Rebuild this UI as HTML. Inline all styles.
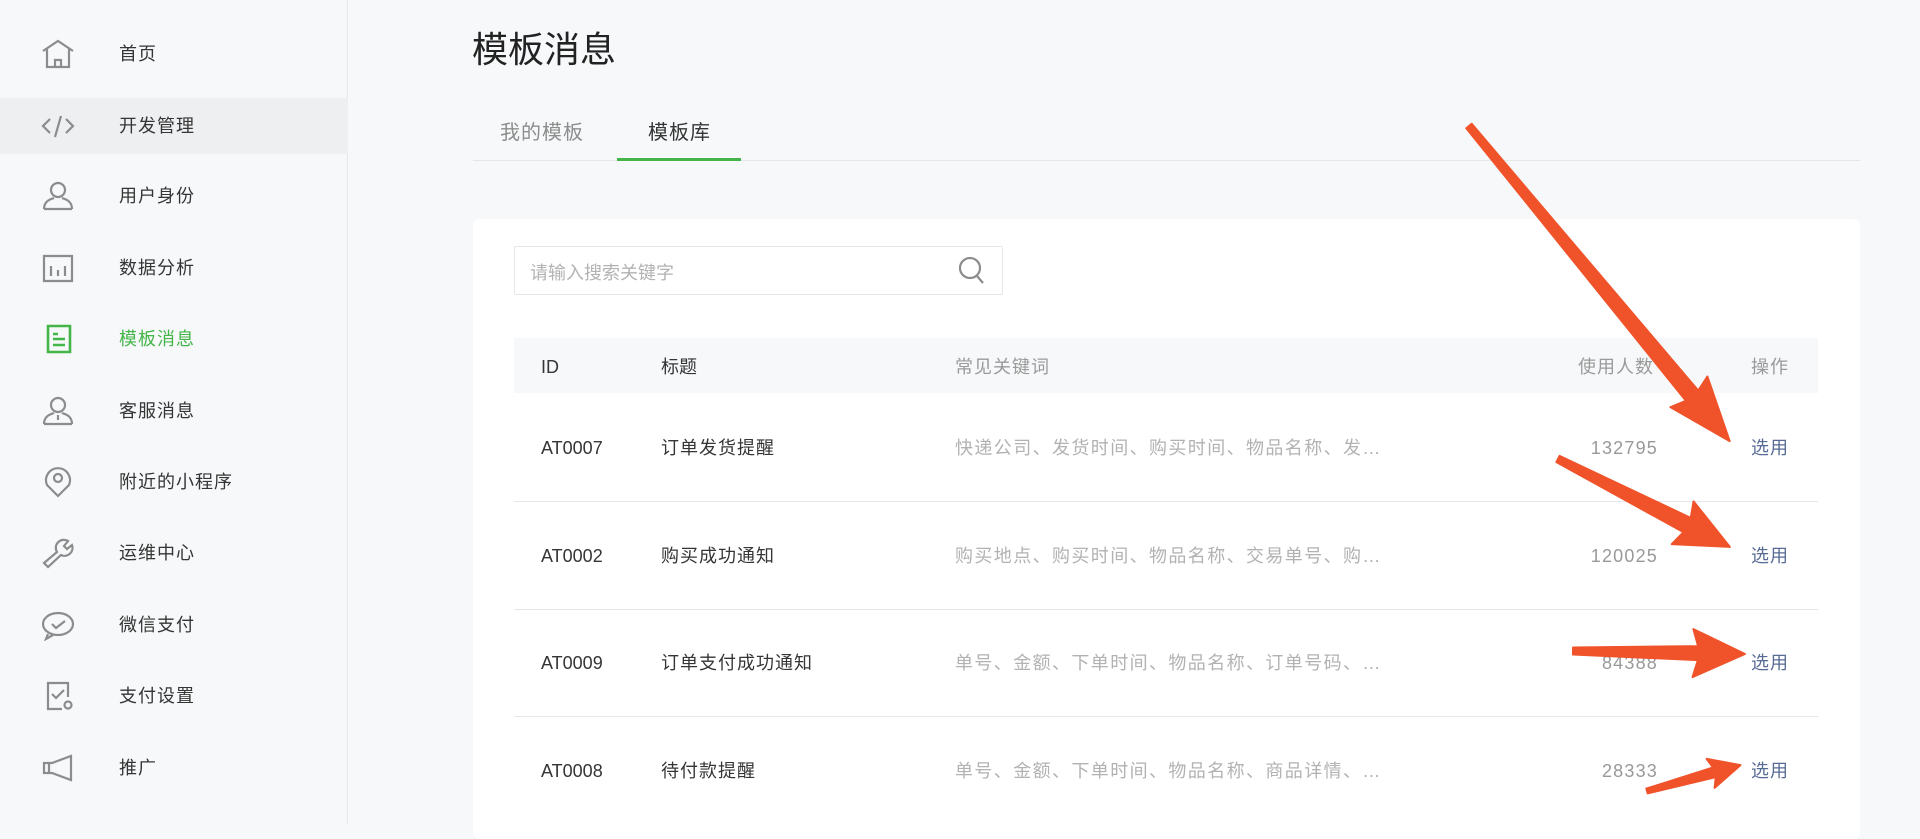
<!DOCTYPE html>
<html><head><meta charset="utf-8"><style>
*{margin:0;padding:0;box-sizing:border-box}
body{width:1920px;height:824px;overflow:hidden;background:#f6f8f9;font-family:"Liberation Sans","Noto Sans CJK SC",sans-serif;position:relative;color:#353535}
.side{position:absolute;left:0;top:0;width:348px;height:824px;border-right:1px solid #e7e7eb;background:#f6f8f9}
.item{position:absolute;left:0;width:348px;height:56px;display:flex;align-items:center;font-size:18px;color:#353535}
.item.hl{background:#eeeff1}
.item svg{position:absolute;left:40px;top:12px}
.item span{position:absolute;left:119px;letter-spacing:1px;line-height:24px;top:16px}
.item.on{color:#44b549}
.abs{position:absolute;line-height:24px}
.t div{line-height:24px}
</style></head><body>
<div class="side">
<div class="item" style="top:26px"><svg width="36" height="32" viewBox="0 0 36 32" fill="none" stroke="#8c8c8c" stroke-width="2.2"><path d="M3 13 L18 3 L33 13 M7 11 V29 H29 V11 M15 29 V22 H21 V29"/></svg><span>首页</span></div>
<div class="item hl" style="top:98px"><svg width="36" height="32" viewBox="0 0 36 32" fill="none" stroke="#8c8c8c" stroke-width="2.2"><path d="M10 9 L3 16 L10 23 M26 9 L33 16 L26 23 M21 6 L15 27"/></svg><span>开发管理</span></div>
<div class="item" style="top:168px"><svg width="36" height="32" viewBox="0 0 36 32" fill="none" stroke="#8c8c8c" stroke-width="2.2"><circle cx="18" cy="10" r="7"/><path d="M4 29 C4 20 12 19 14 18 M32 29 C32 20 24 19 22 18 M4 29 H32"/></svg><span>用户身份</span></div>
<div class="item" style="top:240px"><svg width="36" height="32" viewBox="0 0 36 32" fill="none" stroke="#8c8c8c" stroke-width="2.2"><path d="M4 4 H32 V29 H4 Z M11 14 V24 M18 18 V24 M25 14 V24"/></svg><span>数据分析</span></div>
<div class="item on" style="top:311px"><svg width="36" height="32" viewBox="0 0 36 32" fill="none" stroke="#44b549" stroke-width="2.6"><path d="M8 3 H30 V29 H8 Z M13 11 H18 M13 16 H25 M13 22 H25"/></svg><span>模板消息</span></div>
<div class="item" style="top:383px"><svg width="36" height="32" viewBox="0 0 36 32" fill="none" stroke="#8c8c8c" stroke-width="2.2"><circle cx="18" cy="10" r="7"/><path d="M4 29 C4 20 12 19 14 18 M32 29 C32 20 24 19 22 18 M4 29 H32 M18 20 V25"/></svg><span>客服消息</span></div>
<div class="item" style="top:454px"><svg width="36" height="32" viewBox="0 0 36 32" fill="none" stroke="#8c8c8c" stroke-width="2.2"><path d="M18 30 L7 19 A12 12 0 1 1 29 19 Z"/><circle cx="18" cy="12" r="4"/></svg><span>附近的小程序</span></div>
<div class="item" style="top:525px"><svg width="36" height="32" viewBox="0 0 36 32" fill="none" stroke="#8c8c8c" stroke-width="2.2"><path d="M4 26 L17 15 A8 8 0 0 1 28 4 L24 9 L27 12 L32 8 A8 8 0 0 1 21 18 L8 30 Z"/></svg><span>运维中心</span></div>
<div class="item" style="top:597px"><svg width="36" height="32" viewBox="0 0 36 32" fill="none" stroke="#8c8c8c" stroke-width="2.2"><ellipse cx="18" cy="15" rx="15" ry="11"/><path d="M8 25 L6 30 L13 26 M12 15 L16 19 L25 12"/></svg><span>微信支付</span></div>
<div class="item" style="top:668px"><svg width="36" height="32" viewBox="0 0 36 32" fill="none" stroke="#8c8c8c" stroke-width="2.2"><path d="M22 29 H8 V3 H28 V17 M12 14 L16 18 L24 10"/><circle cx="28" cy="25" r="3.5"/></svg><span>支付设置</span></div>
<div class="item" style="top:740px"><svg width="36" height="32" viewBox="0 0 36 32" fill="none" stroke="#8c8c8c" stroke-width="2.2"><path d="M4 11 H12 L31 4 V28 L12 21 H4 Z M9 11 V21"/></svg><span>推广</span></div>
</div>

<div class="abs" style="left:472px;top:28px;font-size:36px;line-height:44px;color:#222">模板消息</div>
<div class="abs" style="left:500px;top:121px;font-size:20px;color:#8d8d8d;letter-spacing:1px">我的模板</div>
<div class="abs" style="left:648px;top:121px;font-size:20px;color:#353535;letter-spacing:1px">模板库</div>
<div class="abs" style="left:473px;top:160px;width:1387px;height:1px;background:#e4e6e8"></div>
<div class="abs" style="left:617px;top:158px;width:124px;height:3px;background:#44b549"></div>

<div class="abs" style="left:473px;top:219px;width:1387px;height:620px;background:#fff;border-radius:6px"></div>
<div class="abs" style="left:514px;top:246px;width:489px;height:49px;border:1px solid #e4e6e8;border-radius:2px;background:#fff"></div>
<div class="abs" style="left:530px;top:261px;font-size:18px;color:#b2b2b2">请输入搜索关键字</div>
<svg class="abs" style="left:958px;top:256px" width="28" height="30" viewBox="0 0 28 30" fill="none" stroke="#8c8c8c" stroke-width="2.2"><circle cx="12" cy="12" r="10"/><path d="M19 20 L25 27"/></svg>

<div class="abs" style="left:514px;top:338px;width:1304px;height:55px;background:#f6f8f9"></div>
<div style="font-size:18px">
<div class="abs" style="left:541px;top:355px;color:#353535">ID</div>
<div class="abs" style="left:661px;top:355px;color:#353535">标题</div>
<div class="abs" style="left:955px;top:355px;color:#9a9a9a;letter-spacing:1px">常见关键词</div>
<div class="abs" style="left:1578px;top:355px;color:#9a9a9a;letter-spacing:1px">使用人数</div>
<div class="abs" style="left:1751px;top:355px;color:#9a9a9a;letter-spacing:1px">操作</div>
</div>

<div class="abs" style="left:514px;top:501px;width:1304px;height:1px;background:#e7e7eb"></div>
<div class="abs" style="left:514px;top:609px;width:1304px;height:1px;background:#e7e7eb"></div>
<div class="abs" style="left:514px;top:716px;width:1304px;height:1px;background:#e7e7eb"></div>

<div style="font-size:18px">
<div class="abs" style="left:541px;top:436px">AT0007</div><div class="abs" style="left:661px;top:436px;letter-spacing:1px">订单发货提醒</div><div class="abs" style="left:955px;top:436px;color:#b2b2b2;letter-spacing:1.4px">快递公司、发货时间、购买时间、物品名称、发…</div><div class="abs" style="left:1538px;width:120px;text-align:right;top:436px;color:#999;letter-spacing:1.2px">132795</div><div class="abs" style="left:1751px;top:436px;color:#576b95;letter-spacing:1px">选用</div>
<div class="abs" style="left:541px;top:544px">AT0002</div><div class="abs" style="left:661px;top:544px;letter-spacing:1px">购买成功通知</div><div class="abs" style="left:955px;top:544px;color:#b2b2b2;letter-spacing:1.4px">购买地点、购买时间、物品名称、交易单号、购…</div><div class="abs" style="left:1538px;width:120px;text-align:right;top:544px;color:#999;letter-spacing:1.2px">120025</div><div class="abs" style="left:1751px;top:544px;color:#576b95;letter-spacing:1px">选用</div>
<div class="abs" style="left:541px;top:651px">AT0009</div><div class="abs" style="left:661px;top:651px;letter-spacing:1px">订单支付成功通知</div><div class="abs" style="left:955px;top:651px;color:#b2b2b2;letter-spacing:1.4px">单号、金额、下单时间、物品名称、订单号码、…</div><div class="abs" style="left:1538px;width:120px;text-align:right;top:651px;color:#999;letter-spacing:1.2px">84388</div><div class="abs" style="left:1751px;top:651px;color:#576b95;letter-spacing:1px">选用</div>
<div class="abs" style="left:541px;top:759px">AT0008</div><div class="abs" style="left:661px;top:759px;letter-spacing:1px">待付款提醒</div><div class="abs" style="left:955px;top:759px;color:#b2b2b2;letter-spacing:1.4px">单号、金额、下单时间、物品名称、商品详情、…</div><div class="abs" style="left:1538px;width:120px;text-align:right;top:759px;color:#999;letter-spacing:1.2px">28333</div><div class="abs" style="left:1751px;top:759px;color:#576b95;letter-spacing:1px">选用</div>
</div>

<svg class="abs" style="left:0;top:0" width="1920" height="824" fill="#f0522a" stroke="#f0522a" stroke-width="2" stroke-linejoin="round">
<g transform="translate(1469,126) rotate(50.4)"><polygon points="0,-3.5 350,-8 345,-24 409,0 345,24 350,8 0,3.5"/></g>
<g transform="translate(1558,459) rotate(27.1)"><polygon points="0,-3.5 145,-8 140,-24 193,0 140,24 145,8 0,3.5"/></g>
<g transform="translate(1573,651) rotate(1)"><polygon points="0,-3.5 125,-7 120,-24 172,0 120,24 125,7 0,3.5"/></g>
<g transform="translate(1647,791) rotate(-15.5)"><polygon points="0,-2.5 70,-5 66,-15 97,0 66,15 70,5 0,2.5"/></g>
</svg>
</body></html>
